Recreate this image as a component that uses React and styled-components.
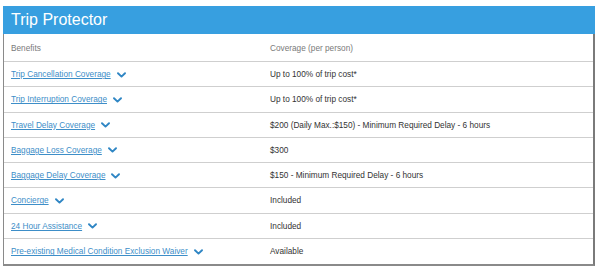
import React from "react";
import styled, { createGlobalStyle } from "styled-components";

const GlobalStyle = createGlobalStyle`
  body {
    margin: 0;
    background: #fff;
    font-family: "Liberation Sans", Arial, sans-serif;
  }
`;

const benefits = [
  ["Trip Cancellation Coverage", "Up to 100% of trip cost*"],
  ["Trip Interruption Coverage", "Up to 100% of trip cost*"],
  ["Travel Delay Coverage", "$200 (Daily Max.:$150) - Minimum Required Delay - 6 hours"],
  ["Baggage Loss Coverage", "$300"],
  ["Baggage Delay Coverage", "$150 - Minimum Required Delay - 6 hours"],
  ["Concierge", "Included"],
  ["24 Hour Assistance", "Included"],
  ["Pre-existing Medical Condition Exclusion Waiver", "Available"],
];

const Chevron = () => (
  <svg width="9" height="6" viewBox="0 0 9 6">
    <path
      d="M1 1.2 L4.5 4.6 L8 1.2"
      fill="none"
      stroke="#2f86c4"
      strokeWidth="1.9"
      strokeLinecap="round"
      strokeLinejoin="round"
    />
  </svg>
);

const App = () => {
  return (
    <Page>
      <GlobalStyle />
      <Card>
        <Title>Trip Protector</Title>
        <Table>
          <Row $head>
            <Cell $muted>Benefits</Cell>
            <Cell $muted>Coverage (per person)</Cell>
          </Row>
          {benefits.map(([name, value]) => (
            <Row key={name}>
              <Cell>
                <BenefitLink href="#">{name}</BenefitLink>
                <Chevron />
              </Cell>
              <Cell>{value}</Cell>
            </Row>
          ))}
        </Table>
      </Card>
    </Page>
  );
};

const Page = styled.div`
  padding: 6px 5px 0 3px;
`;

const Card = styled.div`
  width: 592px;
  box-sizing: border-box;
  border-left: 1px solid #8a8a8a;
  border-right: 2px solid #7a7a7a;
  border-bottom: 2px solid #8a8a8a;
  background: #fff;
`;

const Title = styled.div`
  background: #379fe0;
  color: #fff;
  height: 28px;
  display: flex;
  align-items: center;
  font-size: 16px;
  margin: 0 -2px 0 -1px;
  padding-left: 8px;
`;

const Table = styled.div`
  display: flex;
  flex-direction: column;
`;

const Row = styled.div`
  display: grid;
  grid-template-columns: 259px 1fr;
  align-items: center;
  box-sizing: border-box;
  height: ${(p) => (p.$head ? "28px" : "25.25px")};
  padding-top: 1px;
  border-bottom: 1px solid #cfcfcf;

  &:last-child {
    border-bottom: none;
  }
`;

const Cell = styled.div`
  display: flex;
  align-items: center;
  gap: 6px;
  padding: 0 7px;
  font-size: 8.25px;
  color: ${(p) => (p.$muted ? "#7a7a7a" : "#333")};
  white-space: nowrap;
`;

const BenefitLink = styled.a`
  color: #3d8ec8;
  text-decoration: underline;
`;

export default App;
